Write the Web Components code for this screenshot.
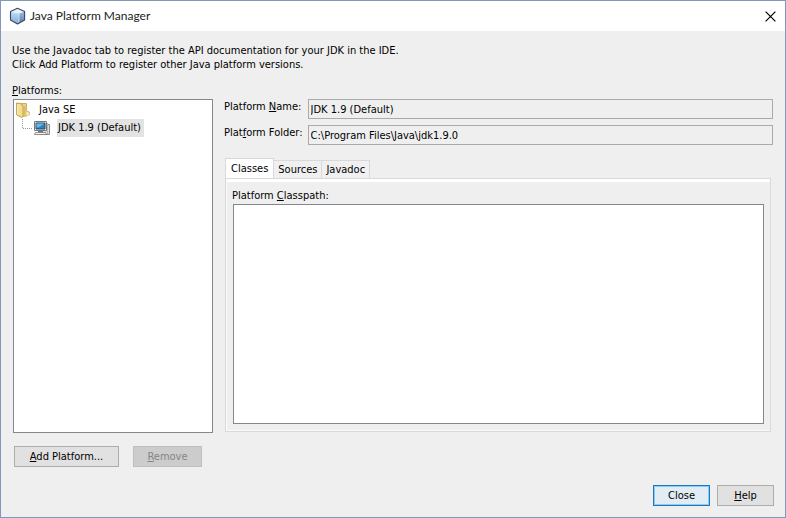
<!DOCTYPE html>
<html lang="en">
<head>
<meta charset="UTF-8">
<title>Java Platform Manager</title>
<style>
    body {
        margin: 0;
        font: 11px/14px "DejaVu Sans Condensed", "Noto Sans", sans-serif;
        color: #000;
        background: #efefef;
    }
</style>
</head>
<body>
<platform-manager></platform-manager>

<script>
class TitleBar extends HTMLElement {
    constructor() {
        super();
        this.attachShadow({ mode: 'open' });
        this.shadowRoot.innerHTML = `
            <style>
                :host {
                    display: flex;
                    align-items: center;
                    gap: 4px;
                    height: 30px;
                    padding: 0 7px 0 8px;
                    background: #fff;
                    color: #222;
                    font: 12px/16px Lato, "Open Sans", sans-serif;
                }

                h1 {
                    flex: 1;
                    margin: 0;
                    font: inherit;
                }

                button {
                    display: flex;
                    padding: 2px;
                    border: 0;
                    background: none;
                }
            </style>
            <svg width="17" height="18" viewBox="0 0 17 18" aria-hidden="true">
                <defs>
                    <linearGradient id="left" x1="0" y1="0" x2="0" y2="1">
                        <stop offset="0" stop-color="#c3dcf3"/>
                        <stop offset="1" stop-color="#86abd8"/>
                    </linearGradient>
                    <linearGradient id="right" x1="0" y1="0" x2="0" y2="1">
                        <stop offset="0" stop-color="#9dbce2"/>
                        <stop offset="1" stop-color="#5d7fb2"/>
                    </linearGradient>
                </defs>
                <path d="M2 4.6 10 6.6v9.6L8.5 16.8 2 13z" fill="url(#left)"/>
                <path d="M10 6.6 15.2 4.6V13L10 16.2z" fill="url(#right)"/>
                <path d="M8.5 1.5 15.2 4.6 10 6.6 2 4.6z" fill="#e6f0fb"/>
                <path d="M10 6.8v9" fill="none" stroke="#d5e6f8" stroke-width=".8"/>
                <path d="M8.5 1.2 15.6 4.4V13l-7.1 4L1.5 13V4.4z" fill="none" stroke="#35465f" stroke-width="1.1" stroke-linejoin="round"/>
            </svg>
            <h1><slot></slot></h1>
            <button type="button" aria-label="Close window">
                <svg width="11" height="11" viewBox="0 0 11 11" aria-hidden="true">
                    <path d="M.6.6 10.4 10.4M10.4.6.6 10.4" stroke="#000" stroke-width="1.2"/>
                </svg>
            </button>
        `;
    }
}

class PushButton extends HTMLElement {
    constructor() {
        super();
        this.attachShadow({ mode: 'open' });
    }

    connectedCallback() {
        const disabled = this.hasAttribute('disabled') ? 'disabled' : '';
        this.shadowRoot.innerHTML = `
            <style>
                :host {
                    display: block;
                }

                button {
                    display: block;
                    height: 21px;
                    padding: 0 13px;
                    border: 1px solid #adadad;
                    border-radius: 0;
                    background: #e1e1e1;
                    color: inherit;
                    font: inherit;
                    white-space: nowrap;
                }

                :host([wide]) button {
                    min-width: 105px;
                }

                :host([small]) button {
                    min-width: 57px;
                    padding: 0;
                }

                :host([default]) button {
                    border-color: #1a78c2;
                    background: #e1ecf5;
                    box-shadow: inset 0 0 0 1px #8ccbf2;
                }

                button:disabled {
                    min-width: 69px;
                    border-color: #bfbfbf;
                    background: #ccc;
                    color: #858585;
                }
            </style>
            <button type="button" ${disabled}><slot></slot></button>
        `;
    }
}

class PlatformTree extends HTMLElement {
    constructor() {
        super();
        this.attachShadow({ mode: 'open' });
        this.shadowRoot.innerHTML = `
            <style>
                :host {
                    display: flex;
                    flex-direction: column;
                }

                .caption {
                    padding-bottom: 1px;
                }

                ul {
                    margin: 0;
                    padding: 0;
                    list-style: none;
                }

                .tree {
                    flex: 1;
                    margin-left: 1px;
                    padding: 1px 0 0 2px;
                    border: 1px solid #828790;
                    background: #fff;
                }

                .row {
                    display: flex;
                    align-items: center;
                    gap: 5px;
                    height: 18px;
                }

                .row span {
                    padding: 2px 3px;
                }

                .child {
                    padding-left: 6px;
                }

                .child .row {
                    gap: 7px;
                }

                .selected span {
                    padding-left: 1px;
                    background: #e3e3e3;
                }
            </style>
            <div class="caption" id="caption"><u>P</u>latforms:</div>
            <ul class="tree" role="tree" aria-labelledby="caption">
                <li role="treeitem" aria-expanded="true">
                    <div class="row">
                        <svg width="15" height="16" viewBox="0 0 15 16" aria-hidden="true">
                            <path d="M5 1.5h5.5V9l3 1.2v2.4l-3.5 1.6H5z" fill="#ecd189" stroke="#c2a050" stroke-width=".8"/>
                            <path d="M10.5 9.6 13.5 11v1.6l-3 1.3z" fill="#f6e8b8"/>
                            <path d="M.6 1 5 1.6 7 4.4v10.2L5.4 15.4.6 12.8z" fill="#f3dd96" stroke="#b8953c" stroke-width=".9"/>
                            <path d="M1.7 2.5v9.8" stroke="#fcf2c9"/>
                            <path d="M7 5v9.2l2.4-1.8V3.6z" fill="#dcb95c"/>
                        </svg>
                        <span>Java SE</span>
                    </div>
                    <ul class="child" role="group">
                        <li role="treeitem" aria-selected="true">
                            <div class="row selected">
                                <svg width="28" height="18" viewBox="0 0 28 18" aria-hidden="true">
                                    <path d="M.5 0v9.5H10" fill="none" stroke="#999" stroke-dasharray="1 1"/>
                                    <path d="M17.5 5.5h10v10h-10z" fill="#ddd" stroke="#8a8a8a"/>
                                    <path d="M25.5 4v11" stroke="#b5b5b5"/>
                                    <path d="M12.5 2.5h12v9h-12z" fill="#f1f1ee" stroke="#77776f"/>
                                    <path d="M14 4h9v6h-9z" fill="#2f7fba" stroke="#1c4c74"/>
                                    <path d="M14.5 4.5h8l-6 4h-2z" fill="#6fb3de"/>
                                    <path d="M16 12h5v1.5h-5z" fill="#777"/>
                                    <path d="M13.5 13.5h10l1 2h-12z" fill="#f4f4f4" stroke="#777" stroke-width=".8"/>
                                </svg>
                                <span>JDK 1.9 (Default)</span>
                            </div>
                        </li>
                    </ul>
                </li>
            </ul>
        `;
    }
}

class PlatformDetails extends HTMLElement {
    constructor() {
        super();
        this.attachShadow({ mode: 'open' });
        this.shadowRoot.innerHTML = `
            <style>
                :host {
                    display: grid;
                    grid-template-columns: auto 1fr;
                    gap: 6px 5px;
                }

                label {
                    padding-top: 1px;
                }

                input {
                    box-sizing: border-box;
                    width: 100%;
                    height: 20px;
                    padding: 0 2px;
                    border: 1px solid #aaa;
                    background: #efefef;
                    color: inherit;
                    font: inherit;
                }
            </style>
            <label for="name">Platform <u>N</u>ame:</label>
            <input id="name" type="text" value="JDK 1.9 (Default)" readonly>
            <label for="folder">Plat<u>f</u>orm Folder:</label>
            <input id="folder" type="text" value="C:\\Program Files\\Java\\jdk1.9.0" readonly>
        `;
    }
}

class ClasspathTabs extends HTMLElement {
    constructor() {
        super();
        this.attachShadow({ mode: 'open' });
        this.shadowRoot.innerHTML = `
            <style>
                :host {
                    display: flex;
                    flex-direction: column;
                }

                .tabs {
                    display: flex;
                    align-items: flex-end;
                }

                .tabs button {
                    height: 18px;
                    padding: 1px 4px 0;
                    border: 1px solid #d9d9d9;
                    border-width: 1px 1px 0 0;
                    background: #f0f0f0;
                    color: inherit;
                    font: inherit;
                }

                .tabs button[aria-selected="true"] {
                    height: 20px;
                    padding: 0 5px;
                    border-left-width: 1px;
                    background: #fff;
                }

                .panel {
                    flex: 1;
                    display: flex;
                    flex-direction: column;
                    gap: 1px;
                    padding: 6px;
                    border: 1px solid #d9d9d9;
                    box-shadow: inset 1px -1px #fafafa, inset 0 3px #fff;
                }

                label {
                    padding-top: 4px;
                }

                textarea {
                    flex: 1;
                    margin: 0 0 1px 1px;
                    border: 1px solid #828790;
                    background: #fff;
                    resize: none;
                    font: inherit;
                }
            </style>
            <div class="tabs" role="tablist">
                <button type="button" role="tab" aria-selected="true">Classes</button>
                <button type="button" role="tab" aria-selected="false">Sources</button>
                <button type="button" role="tab" aria-selected="false">Javadoc</button>
            </div>
            <div class="panel" role="tabpanel">
                <label for="classpath">Platform <u>C</u>lasspath:</label>
                <textarea id="classpath" readonly></textarea>
            </div>
        `;
    }
}

class PlatformManager extends HTMLElement {
    constructor() {
        super();
        this.attachShadow({ mode: 'open' });
        this.shadowRoot.innerHTML = `
            <style>
                :host {
                    box-sizing: border-box;
                    display: flex;
                    flex-direction: column;
                    min-height: 100vh;
                    border: 1px solid #8198b8;
                }

                p {
                    margin: 0;
                    padding: 13px 11px 12px;
                }

                main {
                    flex: 1;
                    display: grid;
                    grid-template-columns: 201px 1fr;
                    gap: 11px;
                    padding: 0 12px 0 11px;
                }

                .details {
                    display: flex;
                    flex-direction: column;
                    gap: 13px;
                    padding-top: 15px;
                }

                classpath-tabs {
                    flex: 1;
                    margin: 0 2px 1px 1px;
                }

                .actions {
                    display: flex;
                    gap: 14px;
                    padding: 13px 13px 0;
                }

                footer {
                    display: flex;
                    justify-content: flex-end;
                    gap: 7px;
                    padding: 18px 11px 11px;
                }
            </style>
            <title-bar>Java Platform Manager</title-bar>
            <p>Use the Javadoc tab to register the API documentation for your JDK in the IDE.<br>
            Click Add Platform to register other Java platform versions.</p>
            <main>
                <platform-tree></platform-tree>
                <div class="details">
                    <platform-details></platform-details>
                    <classpath-tabs></classpath-tabs>
                </div>
            </main>
            <div class="actions">
                <push-button wide><u>A</u>dd Platform...</push-button>
                <push-button disabled><u>R</u>emove</push-button>
            </div>
            <footer>
                <push-button small default>Close</push-button>
                <push-button small><u>H</u>elp</push-button>
            </footer>
        `;
    }
}

customElements.define('title-bar', TitleBar);
customElements.define('push-button', PushButton);
customElements.define('platform-tree', PlatformTree);
customElements.define('platform-details', PlatformDetails);
customElements.define('classpath-tabs', ClasspathTabs);
customElements.define('platform-manager', PlatformManager);
</script>
</body>
</html>
